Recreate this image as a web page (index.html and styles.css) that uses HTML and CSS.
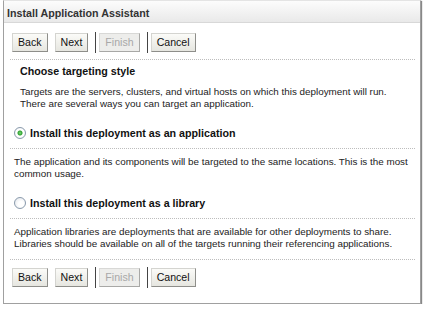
FILE: index.html
```html
<!DOCTYPE html>
<html lang="en">
<head>
  <meta charset="UTF-8" />
  <title>Install Application Assistant</title>
  <link rel="stylesheet" href="styles.css">
</head>
<body>

<div class="panel">
  <div class="panel-title">Install Application Assistant</div>

  <div class="panel-body">
    <div class="button-bar">
      <button type="button">Back</button>
      <button type="button">Next</button>
      <span class="divider"></span>
      <button type="button" disabled>Finish</button>
      <span class="divider"></span>
      <button type="button">Cancel</button>
    </div>

    <h3>Choose targeting style</h3>
    <p class="intro">Targets are the servers, clusters, and virtual hosts on which this deployment will run.<br>There are several ways you can target an application.</p>

    <label class="option">
      <input type="radio" name="target_style" value="application" checked>
      <span>Install this deployment as an application</span>
    </label>
    <p class="note">The application and its components will be targeted to the same locations. This is the most<br>common usage.</p>

    <label class="option">
      <input type="radio" name="target_style" value="library">
      <span>Install this deployment as a library</span>
    </label>
    <p class="note last">Application libraries are deployments that are available for other deployments to share.<br>Libraries should be available on all of the targets running their referencing applications.</p>

    <div class="button-bar bottom">
      <button type="button">Back</button>
      <button type="button">Next</button>
      <span class="divider"></span>
      <button type="button" disabled>Finish</button>
      <span class="divider"></span>
      <button type="button">Cancel</button>
    </div>
  </div>
</div>

</body>
</html>
```

FILE: styles.css
```css
body {
  margin: 0;
  padding: 0;
  background-color: #fff;
  font-family: "Liberation Sans", Arial, sans-serif;
  font-size: 9.85px;
  color: #222;
}

.panel {
  width: 418px;
  height: 304px;
  margin-left: 3px;
  border: 1px solid #a0a0a0;
  border-top: 1px solid #e4e4e4;
  box-shadow: 1px 1px 1px #888;
  box-sizing: border-box;
}

.panel-title {
  height: 21px;
  line-height: 24px;
  padding-left: 3px;
  font-weight: bold;
  font-size: 10.7px;
  color: #333;
  background: linear-gradient(#fcfcfc, #e9e9e9);
  border-bottom: 1px solid #d8d8d8;
  overflow: hidden;
}

.panel-body {
  padding: 9px 5px 0 6px;
}

.button-bar {
  display: flex;
  align-items: center;
  padding: 0 0 6px 2px;
  border-bottom: 1px dotted #bdbdbd;
}

.button-bar.bottom {
  border-bottom: none;
  border-top: 1px dotted #bdbdbd;
  padding-top: 7px;
}

.button-bar button {
  height: 19px;
  margin-right: 7px;
  padding: 0 5px 1px;
  font-family: inherit;
  font-size: 10.6px;
  color: #111;
  background: linear-gradient(#fbfbf8, #e6e6e0);
  border: 1px solid;
  border-color: #d4d4d0 #8e8e8a #8e8e8a #d4d4d0;
  border-radius: 0;
}

.button-bar button:disabled {
  color: #a8a8a8;
  background: #ededeb;
  border-color: #d8d8d6 #a8a8a6 #a8a8a6 #d8d8d6;
}

.divider {
  width: 1px;
  height: 21px;
  margin: 0 3px 0 0;
  background: #444;
}

h3 {
  margin: 5px 0 0 10px;
  font-size: 10.7px;
  line-height: 12px;
  color: #111;
}

.intro {
  margin: 9px 0 0 10px;
  line-height: 12px;
}

.option {
  display: flex;
  align-items: center;
  gap: 4px;
  height: 14px;
  padding: 16px 0 8px 4px;
  border-bottom: 1px dotted #bdbdbd;
  font-weight: bold;
  font-size: 10.7px;
  color: #111;
}

.option input {
  appearance: none;
  margin: 0;
  width: 12px;
  height: 12px;
  border: 1px solid #8a9aac;
  border-radius: 50%;
  background: radial-gradient(circle at 60% 60%, #fff 30%, #dde2e8 100%);
}

.option input:checked {
  background: radial-gradient(circle, #7fdc7f 0, #2ea02e 2px, #fff 3px, #fff 4px, #dde2e8 100%);
}

.note {
  margin: 0;
  padding: 7px 0 0 4px;
  line-height: 12px;
}

.note.last {
  padding: 7px 0 9px 4px;
}
```
